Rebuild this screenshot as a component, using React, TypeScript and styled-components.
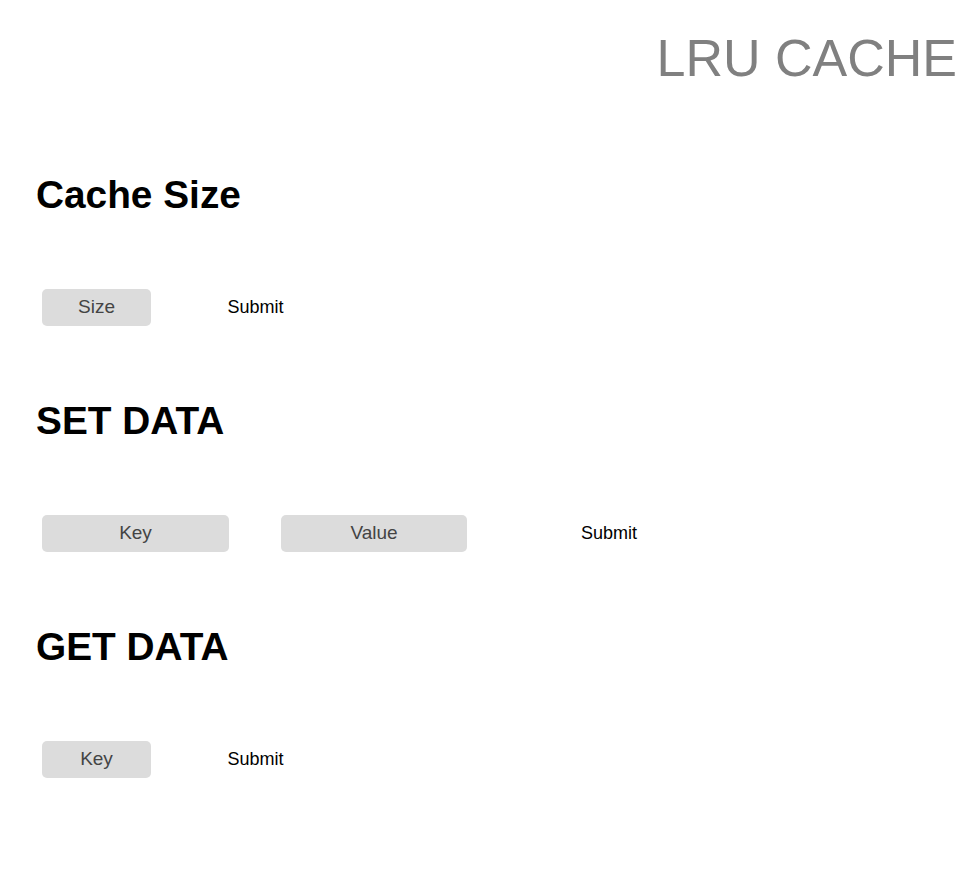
import React from "react";
import styled, { createGlobalStyle } from "styled-components";

const Global = createGlobalStyle`
  html, body { margin: 0; padding: 0; background: #ffffff; }
  body { font-family: "Liberation Sans", Arial, sans-serif; }
`;

const Page = styled.div`
  display: flex;
  flex-direction: column;
  padding: 28px 16px 60px 36px;
`;

const Title = styled.h1`
  margin: 0;
  align-self: flex-end;
  font-size: 52px;
  font-weight: 400;
  line-height: 60px;
  color: #808080;
`;

const Section = styled.section<{ $top: number }>`
  display: flex;
  flex-direction: column;
  margin-top: ${(p) => p.$top}px;
`;

const Heading = styled.h2`
  margin: 0;
  font-size: 38.8px;
  font-weight: 700;
  line-height: 43px;
  color: #000;
`;

const Row = styled.div`
  display: flex;
  align-items: center;
  margin-top: 73px;
  padding-left: 6px;
  height: 37px;
`;

const Field = styled.input<{ $w: number; $gap?: number }>`
  box-sizing: border-box;
  width: ${(p) => p.$w}px;
  height: 37px;
  margin-left: ${(p) => p.$gap ?? 0}px;
  padding: 0 0 2px;
  border: none;
  border-radius: 5px;
  background: #dcdcdc;
  font-family: "Liberation Sans", Arial, sans-serif;
  font-size: 19px;
  color: #444;
  text-align: center;
  outline: none;
  &::placeholder { color: #444; }
`;

const SubmitButton = styled.button<{ $w: number }>`
  width: ${(p) => p.$w}px;
  height: 37px;
  margin-left: 50px;
  border: none;
  background: transparent;
  font-family: "Liberation Sans", Arial, sans-serif;
  font-size: 18px;
  color: #000;
  padding: 0;
  cursor: pointer;
`;

export default function App() {
  return (
    <>
      <Global />
      <Page>
        <Title>LRU CACHE</Title>
        <Section $top={85}>
          <Heading>Cache Size</Heading>
          <Row>
            <Field $w={109} placeholder="Size" />
            <SubmitButton $w={109}>Submit</SubmitButton>
          </Row>
        </Section>
        <Section $top={73}>
          <Heading>SET DATA</Heading>
          <Row>
            <Field $w={187} placeholder="Key" />
            <Field $w={186} $gap={52} placeholder="Value" />
            <SubmitButton $w={184}>Submit</SubmitButton>
          </Row>
        </Section>
        <Section $top={73}>
          <Heading>GET DATA</Heading>
          <Row>
            <Field $w={109} placeholder="Key" />
            <SubmitButton $w={109}>Submit</SubmitButton>
          </Row>
        </Section>
      </Page>
    </>
  );
}
